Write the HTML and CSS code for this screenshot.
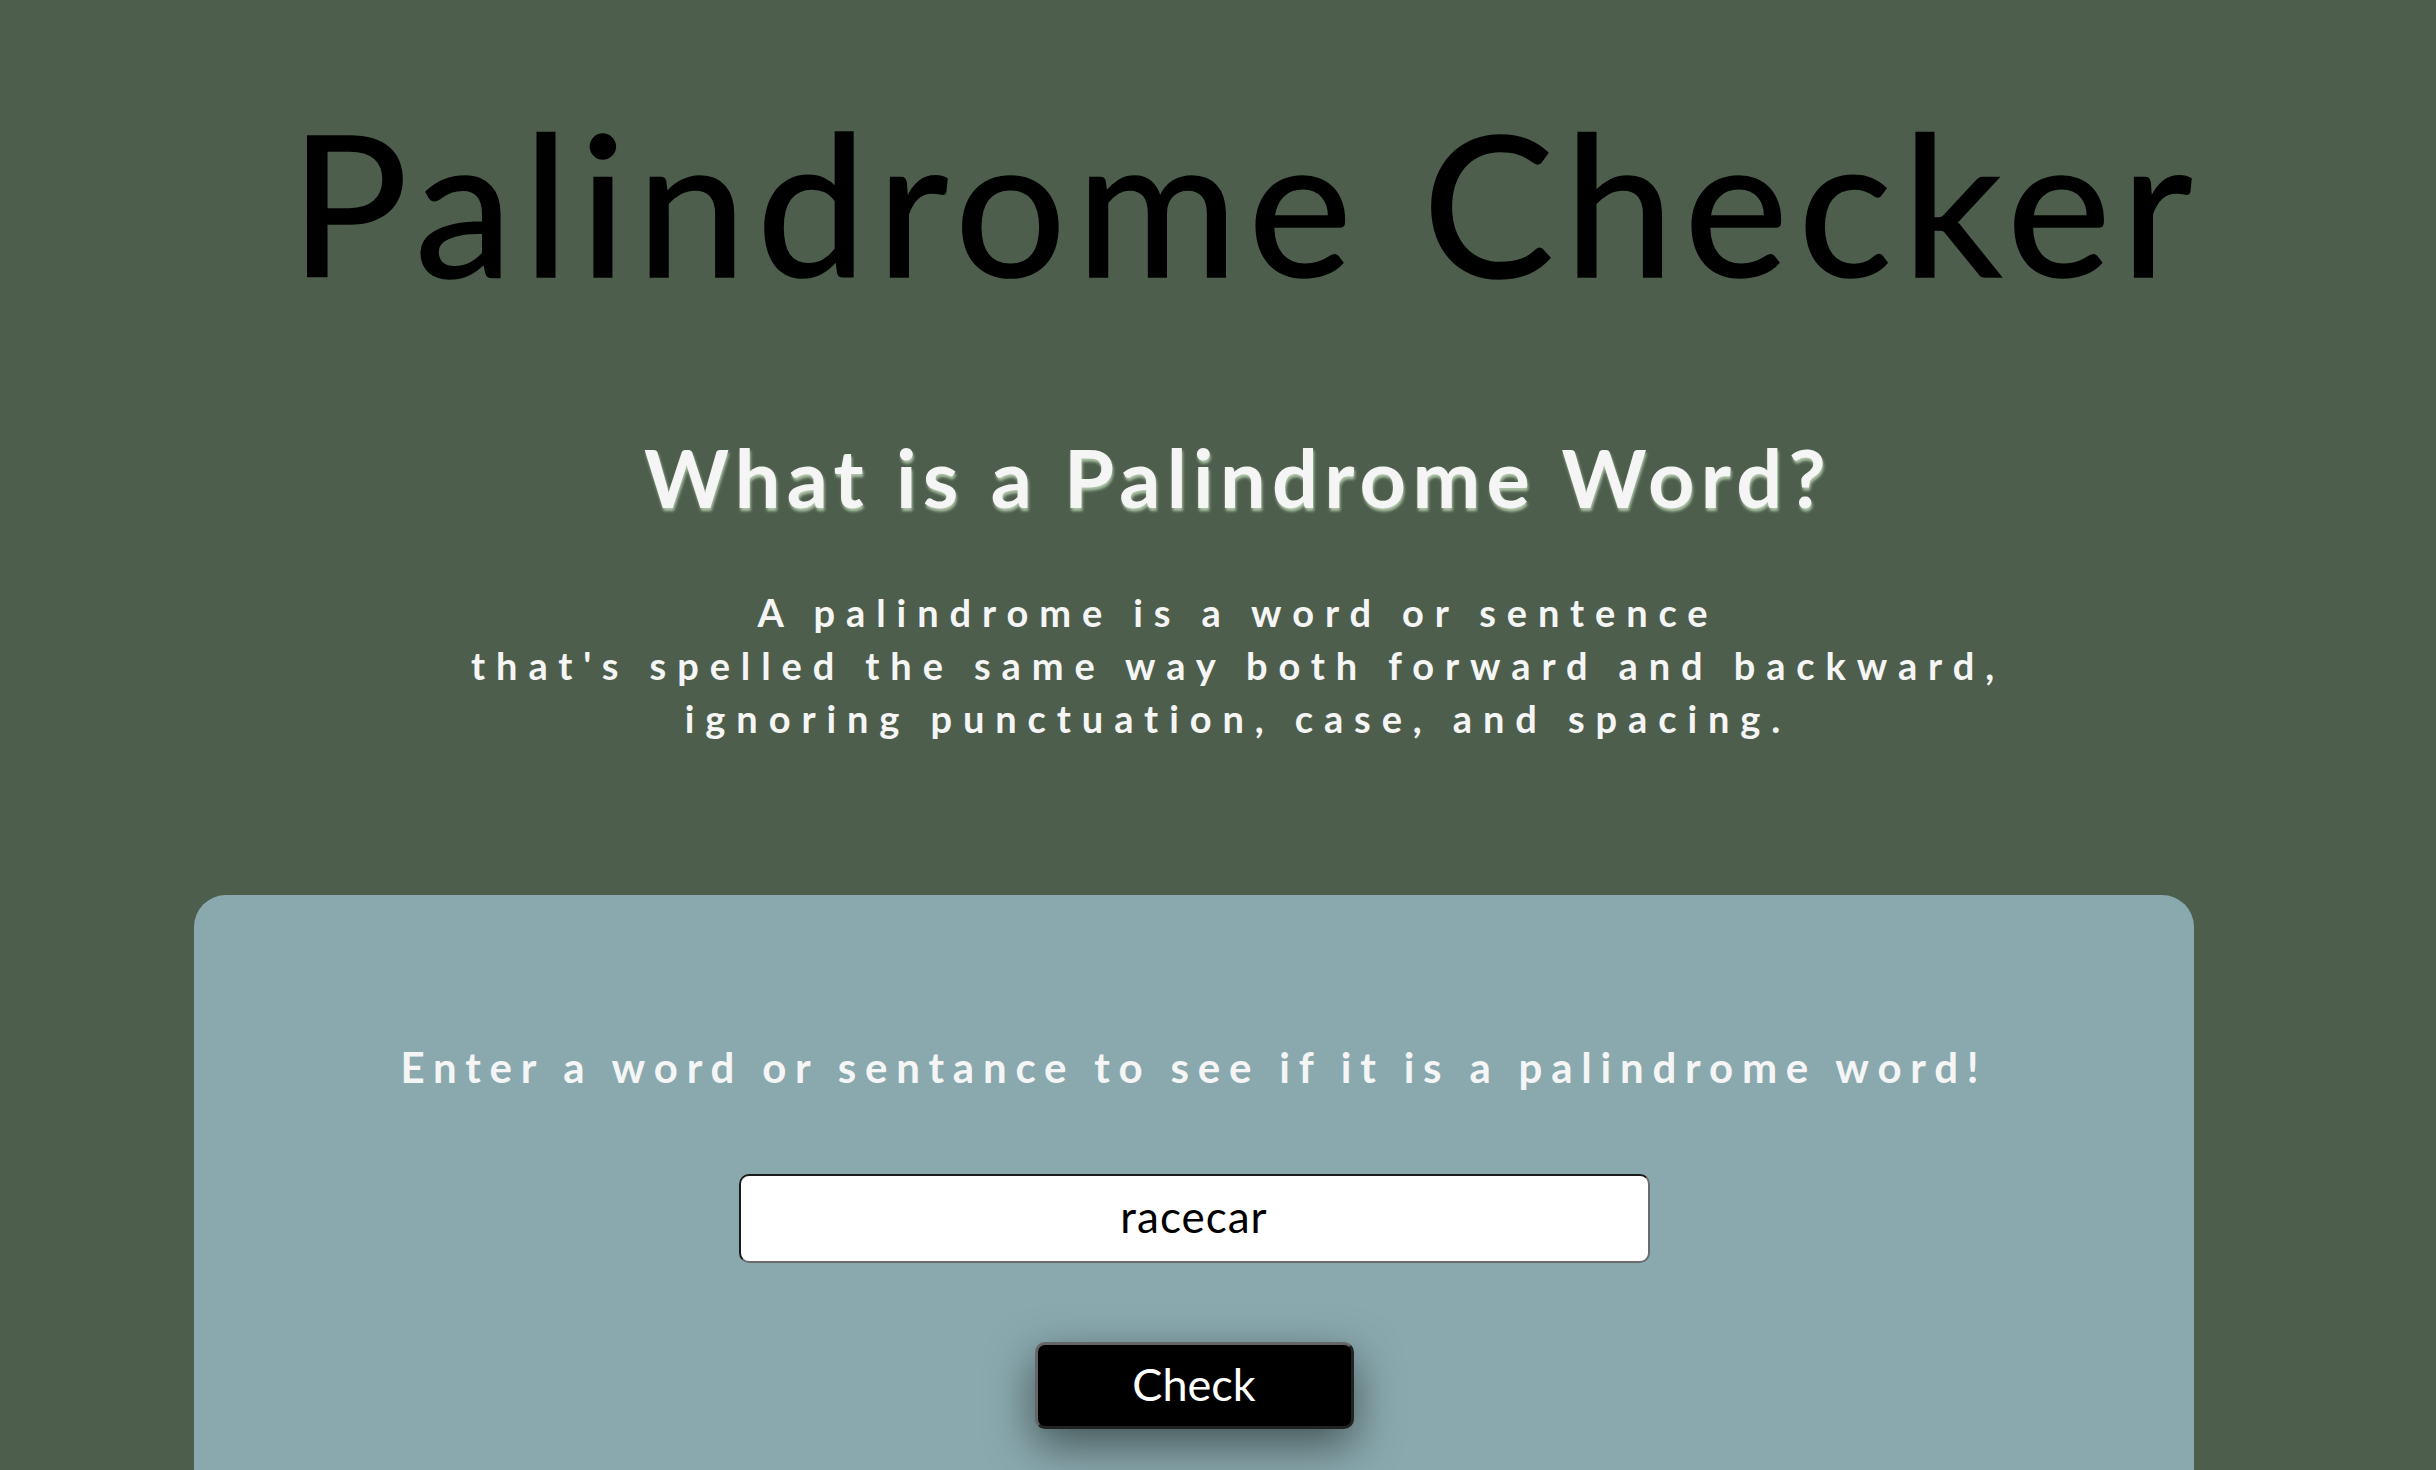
FILE: index.html
```html
<!DOCTYPE html>
<html lang="en">
<head>
<meta charset="utf-8">
<title>Palindrome Checker</title>
<link rel="stylesheet" href="styles.css">
</head>
<body>
<header class="intro">
  <h1 class="title">Palindrome Checker</h1>
  <h2 class="subtitle">What is a Palindrome Word?</h2>
  <p class="explain">A palindrome is a word or sentence<br>that's spelled the same way both forward and backward,<br>ignoring punctuation, case, and spacing.</p>
</header>
<main class="card">
  <p class="prompt">Enter a word or sentance to see if it is a palindrome word!</p>
  <input class="text-input" type="text" value="racecar">
  <button class="check-btn" type="button">Check</button>
</main>
</body>
</html>
```

FILE: styles.css
```css
* { box-sizing: border-box; }
html, body { margin: 0; padding: 0; }
body {
  background: #4d5f4c;
  font-family: Lato, "Open Sans", sans-serif;
  overflow: hidden;
  height: 1470px;
}
.intro {
  padding-left: 40px;
  text-align: center;
}
.title {
  margin: 103px 0 0;
  padding-left: 16px;
  font-size: 197px;
  line-height: 1;
  font-weight: 400;
  color: #000;
  letter-spacing: 10px;
  -webkit-text-stroke: 1.5px #000;
}
.subtitle {
  margin: 136px 0 0;
  font-size: 81px;
  line-height: 1;
  font-weight: 700;
  color: #f5f5f5;
  text-shadow: 1px 3px 3px rgba(215, 240, 205, 0.7);
  letter-spacing: 6.3px;
}
.explain {
  margin: 69px 0 0;
  font-size: 38px;
  line-height: 53px;
  font-weight: 700;
  color: #f5f5f5;
  letter-spacing: 10.9px;
}
.card {
  margin: 150px 0 0 194px;
  width: 2000px;
  height: 700px;
  background: #89a9ae;
  border-radius: 32px;
  padding-top: 147px;
  display: flex;
  flex-direction: column;
  align-items: center;
}
.prompt {
  margin: 0;
  font-size: 42px;
  line-height: 1.2;
  font-weight: 700;
  color: #f5f5f5;
  letter-spacing: 8.8px;
}
.text-input {
  margin-top: 82px;
  width: 911px;
  height: 89px;
  padding: 0 0 6px;
  border: 2px solid;
  border-color: #1a1a1a #6b6b6b #6b6b6b #1a1a1a;
  border-radius: 10px;
  background: #fff;
  font-family: Lato, sans-serif;
  font-size: 44px;
  letter-spacing: 1px;
  color: #000;
  text-align: center;
  outline: none;
}
.check-btn {
  margin-top: 79px;
  width: 319px;
  height: 87px;
  padding: 0 0 4px;
  background: #000;
  color: #fff;
  border: 3px solid;
  border-color: #666 #222 #222 #666;
  border-radius: 10px;
  font-family: Lato, sans-serif;
  font-size: 45px;
  box-shadow: 0 16px 45px rgba(0, 0, 0, 0.5);
}
```
